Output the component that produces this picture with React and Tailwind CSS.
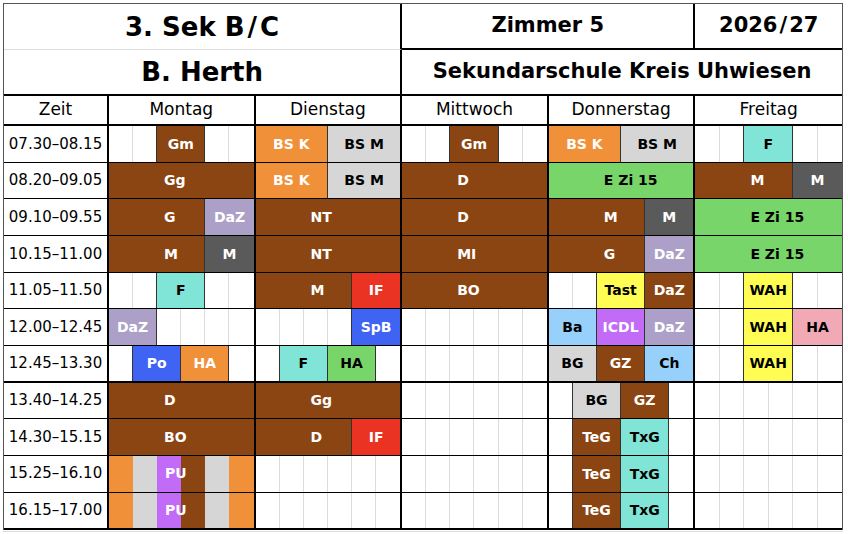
import React from "react";
import clsx from "clsx";

const COLORS = {
  br: "bg-[#8b4513] text-white",
  or: "bg-[#f0913a] text-white",
  lg: "bg-[#d6d6d6] text-black",
  dg: "bg-[#5a5a5a] text-white",
  lav: "bg-[#aca0c8] text-white",
  tq: "bg-[#80e4d6] text-black",
  gr: "bg-[#78d56a] text-black",
  rd: "bg-[#ea3323] text-white",
  bl: "bg-[#3f63f3] text-white",
  lb: "bg-[#96d0fb] text-black",
  pu: "bg-[#c26bf6] text-white",
  ye: "bg-[#fffd54] text-black",
  pk: "bg-[#f2a9b6] text-black",
};

const STRIPE = {
  or: "bg-[#f0913a]",
  lg: "bg-[#d6d6d6]",
  pu: "bg-[#c26bf6]",
  br: "bg-[#8b4513]",
};

const SPAN = {
  1: "col-span-1",
  2: "col-span-2",
  3: "col-span-3",
  4: "col-span-4",
  6: "col-span-6",
};

const E = null;
const EMPTY = [E, E, E, E, E, E];
const PU = { label: "PU", stripes: ["or", "lg", "pu", "br", "lg", "or"] };
const TEG = [E, ["TeG", "br", 2], ["TxG", "tq", 2], E];

const rows = [
  {
    time: "07.30–08.15",
    days: [
      [E, E, ["Gm", "br", 2], E, E],
      [["BS K", "or", 3], ["BS M", "lg", 3]],
      [E, E, ["Gm", "br", 2], E, E],
      [["BS K", "or", 3], ["BS M", "lg", 3]],
      [E, E, ["F", "tq", 2], E, E],
    ],
  },
  {
    time: "08.20–09.05",
    days: [
      [["Gg", "br", 6]],
      [["BS K", "or", 3], ["BS M", "lg", 3]],
      [["D", "br", 6]],
      [["E Zi 15", "gr", 6]],
      [["M", "br", 4], ["M", "dg", 2]],
    ],
  },
  {
    time: "09.10–09.55",
    days: [
      [["G", "br", 4], ["DaZ", "lav", 2]],
      [["NT", "br", 6]],
      [["D", "br", 6]],
      [["M", "br", 4], ["M", "dg", 2]],
      [["E Zi 15", "gr", 6]],
    ],
  },
  {
    time: "10.15–11.00",
    days: [
      [["M", "br", 4], ["M", "dg", 2]],
      [["NT", "br", 6]],
      [["MI", "br", 6]],
      [["G", "br", 4], ["DaZ", "lav", 2]],
      [["E Zi 15", "gr", 6]],
    ],
  },
  {
    time: "11.05–11.50",
    days: [
      [E, E, ["F", "tq", 2], E, E],
      [["M", "br", 4], ["IF", "rd", 2]],
      [["BO", "br", 6]],
      [E, E, ["Tast", "ye", 2], ["DaZ", "br", 2]],
      [E, E, ["WAH", "ye", 2], E, E],
    ],
  },
  {
    time: "12.00–12.45",
    days: [
      [["DaZ", "lav", 2], E, E, E, E],
      [E, E, E, E, ["SpB", "bl", 2]],
      EMPTY,
      [["Ba", "lb", 2], ["ICDL", "pu", 2], ["DaZ", "lav", 2]],
      [E, E, ["WAH", "ye", 2], ["HA", "pk", 2]],
    ],
  },
  {
    time: "12.45–13.30",
    thick: true,
    days: [
      [E, ["Po", "bl", 2], ["HA", "or", 2], E],
      [E, ["F", "tq", 2], ["HA", "gr", 2], E],
      EMPTY,
      [["BG", "lg", 2], ["GZ", "br", 2], ["Ch", "lb", 2]],
      [E, E, ["WAH", "ye", 2], E, E],
    ],
  },
  {
    time: "13.40–14.25",
    days: [
      [["D", "br", 6]],
      [["Gg", "br", 6]],
      EMPTY,
      [E, ["BG", "lg", 2], ["GZ", "br", 2], E],
      EMPTY,
    ],
  },
  {
    time: "14.30–15.15",
    days: [[["BO", "br", 6]], [["D", "br", 4], ["IF", "rd", 2]], EMPTY, TEG, EMPTY],
  },
  {
    time: "15.25–16.10",
    days: [PU, EMPTY, EMPTY, TEG, EMPTY],
  },
  {
    time: "16.15–17.00",
    thick: true,
    days: [PU, EMPTY, EMPTY, TEG, EMPTY],
  },
];

const DAYS = ["Montag", "Dienstag", "Mittwoch", "Donnerstag", "Freitag"];

function DayCell({ items, last, thick }) {
  const frame = clsx(
    "border-black",
    last ? "" : "border-r-2",
    thick ? "border-b-2" : "border-b"
  );

  if (items && items.stripes) {
    return (
      <div className={clsx("relative grid grid-cols-6", frame)}>
        {items.stripes.map((s, i) => (
          <div key={i} className={STRIPE[s]} />
        ))}
        <span className="absolute inset-y-0 left-[56px] flex items-center text-[14px] font-bold text-white">
          {items.label}
        </span>
      </div>
    );
  }

  let pos = 0;
  return (
    <div className={clsx("grid grid-cols-6", frame)}>
      {items.map((it, i) => {
        const start = pos;
        if (!it) {
          pos += 1;
          return <div key={i} className={clsx(pos < 6 && "border-r border-[#dcdcdc]")} />;
        }
        const [label, color, span] = it;
        pos += span;
        return (
          <div
            key={i}
            className={clsx(
              SPAN[span],
              COLORS[color],
              "flex items-center text-[14px] font-bold leading-none",
              span >= 4 ? "pl-[55px]" : "justify-center",
              start > 0 && "shadow-[-1px_0_0_#333]",
              start + span < 6 && "border-r border-[#333]"
            )}
          >
            {label}
          </div>
        );
      })}
    </div>
  );
}

export default function App() {
  return (
    <div className="w-[848px] h-[534px] overflow-hidden bg-white pl-[3px] pt-[3px] font-['DejaVu_Sans',Verdana,sans-serif] text-black">
      <div className="w-[840px] border-l border-r border-t border-[#555]">
        <div className="grid grid-cols-[105px_repeat(5,1fr)] grid-rows-[46px_46px_30px_repeat(10,36.67px)_37.5px]">
          {/* Kopf */}
          <div className="col-span-3 flex items-center justify-center border-b border-r-2 border-b-[#dcdcdc] border-r-black pt-[2px] text-[26px] font-bold">
            3. Sek B<span className="mx-[3px]">/</span>C
          </div>
          <div className="col-span-2 flex items-center justify-center border-b-2 border-r-2 border-black text-[21px] font-bold">
            Zimmer 5
          </div>
          <div className="flex items-center justify-center border-b-2 border-black text-[21px] font-bold">
            2026<span className="mx-[2px]">/</span>27
          </div>
          <div className="col-span-3 flex items-center justify-center border-b-2 border-r-2 border-black text-[26px] font-bold">
            B. Herth
          </div>
          <div className="col-span-3 flex items-center justify-center border-b-2 border-black text-[21px] font-bold">
            Sekundarschule Kreis Uhwiesen
          </div>

          {/* Wochentage */}
          <div className="flex items-center justify-center border-b-2 border-r-2 border-black text-[17px]">
            Zeit
          </div>
          {DAYS.map((d, i) => (
            <div
              key={d}
              className={clsx(
                "flex items-center justify-center border-b-2 border-black text-[17px]",
                i < 4 && "border-r-2"
              )}
            >
              {d}
            </div>
          ))}

          {/* Lektionen */}
          {rows.map((r) => (
            <React.Fragment key={r.time}>
              <div
                className={clsx(
                  "flex items-center justify-center border-r-2 border-black text-[15px]",
                  r.thick ? "border-b-2" : "border-b"
                )}
              >
                {r.time}
              </div>
              {r.days.map((items, i) => (
                <DayCell key={i} items={items} last={i === 4} thick={r.thick} />
              ))}
            </React.Fragment>
          ))}
        </div>
      </div>
      <div className="mt-[1px] h-px w-[840px] bg-[#dcdcdc]" />
    </div>
  );
}
